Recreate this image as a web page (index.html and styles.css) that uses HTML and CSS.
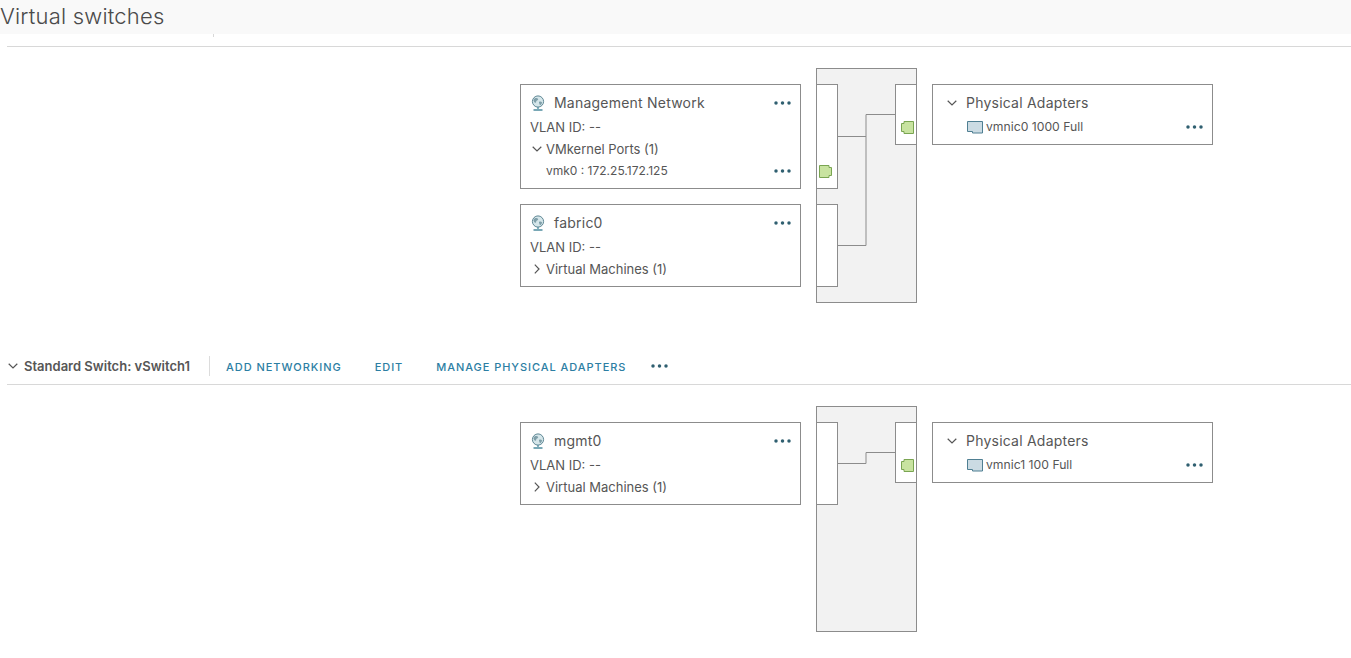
FILE: index.html
```html
<!DOCTYPE html>
<html lang="en">
<head>
<meta charset="utf-8">
<title>Virtual switches</title>
<link rel="stylesheet" href="styles.css">
</head>
<body>
<svg class="defs" width="0" height="0" aria-hidden="true">
  <defs>
    <symbol id="dots" viewBox="0 0 17 4"><circle cx="2" cy="2" r="1.75"/><circle cx="8.500" cy="2" r="1.75"/><circle cx="15" cy="2" r="1.75"/></symbol>
    <symbol id="globe" viewBox="0 0 16 16">
      <circle cx="8" cy="6.5" r="5.6" fill="#d5e6ea" stroke="#5f8794" stroke-width="1"/>
      <path d="M4.5 3.5c1.5-.8 3-.6 3.600.4.4.9-.8 1.200-1.500 1.800-.7.7-.2 1.800-1 2.100C4.500 8 3.300 6 3.500 4.700zM9 7c1-.7 2.500-.4 3 .3.200 1-.8 2.500-1.800 2.900C9.500 9.800 9.500 8.800 9 8z" fill="#7f9fa9"/>
      <path d="M8 12v2M3.500 15h9" fill="none" stroke="#4d8c9f" stroke-width="1.300"/>
    </symbol>
    <symbol id="nic" viewBox="0 0 16 13">
      <path d="M.5 10.500V.5h15v11.500H5.500v-1.500z" fill="#cbdbe3" stroke="#4f7f92" stroke-width="1"/>
    </symbol>
    <symbol id="chev-down" viewBox="0 0 10 6"><path d="M.7.8 5 5 9.300.8" fill="none" stroke="#565656" stroke-width="1.200"/></symbol>
    <symbol id="chev-right" viewBox="0 0 6 10"><path d="M.8.7 5 5 .8 9.300" fill="none" stroke="#565656" stroke-width="1.200"/></symbol>
    <symbol id="port-right" viewBox="0 0 13 13">
      <path d="M3 .5h9.500v12H3v-2H.5v-8H3z" fill="#c8e3a0" stroke="#7aa552" stroke-width="1"/>
    </symbol>
    <symbol id="port-left" viewBox="0 0 13 13">
      <path d="M10 .5H.5v12H10v-2h2.500v-8H10z" fill="#c8e3a0" stroke="#7aa552" stroke-width="1"/>
    </symbol>
  </defs>
</svg>

<header class="page-header"><h1 class="page-title">Virtual switches</h1></header>

<section class="switch">
  <div class="toolbar toolbar-clipped"><span class="tick"></span></div>
  <div class="diagram diagram-first">
    <div class="column">
      <article class="card">
        <div class="card-title"><svg class="icon-globe"><use href="#globe"/></svg><span class="title-text">Management Network</span><svg class="dots"><use href="#dots"/></svg></div>
        <div class="row row-vlan">VLAN ID: --</div>
        <div class="row row-tree"><svg class="chev-down"><use href="#chev-down"/></svg>VMkernel Ports (1)</div>
        <div class="row row-leaf"><span class="leaf-text">vmk0 : 172.25.172.125</span><svg class="dots"><use href="#dots"/></svg></div>
      </article>
      <article class="card">
        <div class="card-title"><svg class="icon-globe"><use href="#globe"/></svg><span class="title-text">fabric0</span><svg class="dots"><use href="#dots"/></svg></div>
        <div class="row row-vlan">VLAN ID: --</div>
        <div class="row row-tree"><svg class="chev-right"><use href="#chev-right"/></svg>Virtual Machines (1)</div>
      </article>
    </div>
    <svg class="fabric" width="101" height="235" viewBox="0 0 101 235">
      <rect class="fabric-bg" x=".5" y=".5" width="100" height="234"/>
      <rect class="slot" x=".5" y="16.500" width="21" height="104"/>
      <rect class="slot" x=".5" y="136.500" width="21" height="82"/>
      <rect class="slot" x="79.500" y="16.500" width="21" height="60"/>
      <path class="wire" d="M21.500 68.500h28.500M21.500 177.500h28.500V46.500h29.500"/>
      <use href="#port-left" x="3" y="97" width="13" height="13"/>
      <use href="#port-right" x="85" y="53" width="13" height="13"/>
    </svg>
    <div class="column">
      <article class="card">
        <div class="card-title"><svg class="chev-down chev-adapter"><use href="#chev-down"/></svg><span class="title-text">Physical Adapters</span></div>
        <div class="row row-nic"><svg class="icon-nic"><use href="#nic"/></svg><span class="leaf-text">vmnic0 1000 Full</span><svg class="dots"><use href="#dots"/></svg></div>
      </article>
    </div>
  </div>
</section>

<section class="switch">
  <div class="toolbar toolbar-full">
    <svg class="chev-down chev-toolbar"><use href="#chev-down"/></svg>
    <span class="switch-name">Standard Switch: vSwitch1</span>
    <span class="divider"></span>
    <a class="action action-add">ADD NETWORKING</a>
    <a class="action action-edit">EDIT</a>
    <a class="action action-manage">MANAGE PHYSICAL ADAPTERS</a>
    <svg class="dots dots-toolbar"><use href="#dots"/></svg>
  </div>
  <div class="diagram">
    <div class="column">
      <article class="card">
        <div class="card-title"><svg class="icon-globe"><use href="#globe"/></svg><span class="title-text">mgmt0</span><svg class="dots"><use href="#dots"/></svg></div>
        <div class="row row-vlan">VLAN ID: --</div>
        <div class="row row-tree"><svg class="chev-right"><use href="#chev-right"/></svg>Virtual Machines (1)</div>
      </article>
    </div>
    <svg class="fabric" width="101" height="226" viewBox="0 0 101 226">
      <rect class="fabric-bg" x=".5" y=".5" width="100" height="225"/>
      <rect class="slot" x=".5" y="16.500" width="21" height="82"/>
      <rect class="slot" x="79.500" y="16.500" width="21" height="60"/>
      <path class="wire" d="M21.500 57.500h28.500V46.500h29.500"/>
      <use href="#port-right" x="85" y="53" width="13" height="13"/>
    </svg>
    <div class="column">
      <article class="card">
        <div class="card-title"><svg class="chev-down chev-adapter"><use href="#chev-down"/></svg><span class="title-text">Physical Adapters</span></div>
        <div class="row row-nic"><svg class="icon-nic"><use href="#nic"/></svg><span class="leaf-text">vmnic1 100 Full</span><svg class="dots"><use href="#dots"/></svg></div>
      </article>
    </div>
  </div>
</section>
</body>
</html>
```
FILE: styles.css
```css
* { box-sizing: border-box; }
html, body { margin: 0; padding: 0; background: #fff; }
body { font-family: "Inter", "Liberation Sans", sans-serif; color: #565656; font-size: 13px; overflow: hidden; }
.defs { position: absolute; }

.page-header { height: 34px; background: #f9f9f9; }
.page-title { margin: 0; font-size: 22px; font-weight: 300; line-height: 33px; color: #4a4a4a; letter-spacing: .2px; }

.toolbar { position: relative; margin-left: 7px; border-bottom: 1px solid #d8d8d8; }
.toolbar-clipped { height: 13px; }
.tick { display: block; width: 1px; height: 3px; margin-left: 206px; background: #d8d8d8; }
.toolbar-full { display: flex; align-items: center; height: 35px; margin-top: 47px; }

.chev-toolbar { width: 10px; height: 6px; margin: -3px 6px 0 1px; }
.switch-name { font-size: 13px; font-weight: 600; color: #565656; width: 185px; white-space: nowrap; margin-top: -3px; }
.divider { width: 1px; height: 20px; margin-top: -3px; background: #dcdcdc; }
.action { font-size: 11px; font-weight: 500; letter-spacing: .95px; color: #2c7ea3; white-space: nowrap; }
.action-add { margin-left: 16px; }
.action-edit { margin-left: 33px; }
.action-manage { margin-left: 33px; }
.dots-toolbar { width: 16px; margin-left: 25px; margin-top: -3px; fill: #2c7ea3; }

.diagram { display: flex; align-items: flex-start; gap: 15px; padding: 21px 0 0 520px; }
.column { display: flex; flex-direction: column; gap: 15px; width: 281px; padding-top: 16px; }
.fabric { flex: none; display: block; }
.fabric-bg { fill: #f2f2f2; stroke: #8c8c8c; }
.slot { fill: #fff; stroke: #8c8c8c; }
.wire { fill: none; stroke: #8c8c8c; }

.card { border: 1px solid #8c8c8c; background: #fff; padding: 7px 9px 6px 9px; }
.card-title { display: flex; align-items: center; height: 22px; font-size: 14px; font-weight: 400; color: #565656; }
.title-text { flex: 1; white-space: nowrap; letter-spacing: .22px; margin-bottom: 2px; }
.icon-globe { width: 16px; height: 16px; margin-right: 8px; flex: none; }
.chev-adapter { width: 10px; height: 6px; margin: 0 9px 0 5px; }
.dots { width: 17px; height: 4px; fill: #2f5f70; flex: none; }

.row { display: flex; align-items: center; height: 22px; white-space: nowrap; font-size: 13px; }
.row-vlan { margin-top: 2px; }
.row-tree { padding-left: 2px; }
.chev-down { width: 10px; height: 6px; flex: none; }
.row-tree .chev-down { margin-right: 4px; }
.chev-right { width: 6px; height: 10px; margin: 0 6px 0 2px; flex: none; }
.row-leaf { padding-left: 16px; font-size: 12px; }
.row-nic { margin-top: 2px; padding-left: 25px; font-size: 12.200px; }
.leaf-text { flex: 1; margin-bottom: 2px; }
.icon-nic { width: 16px; height: 13px; margin-right: 3px; flex: none; }
```
